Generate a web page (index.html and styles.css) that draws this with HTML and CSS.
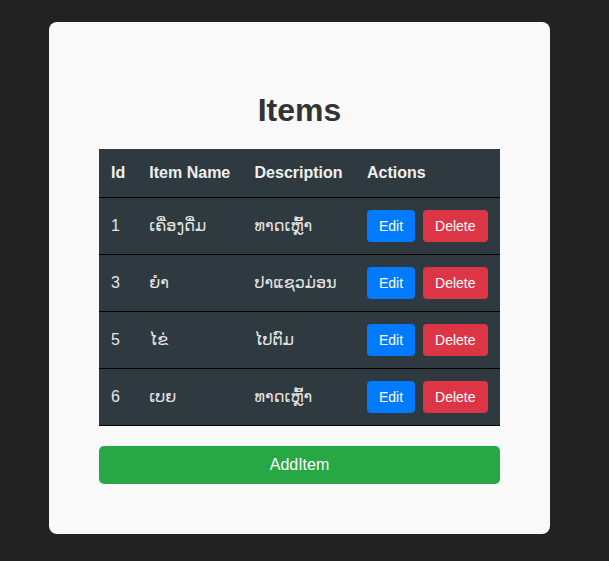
FILE: index.html
```html
<!DOCTYPE html>
<html lang="lo">
<head>
<meta charset="utf-8">
<title>Items</title>
<link rel="stylesheet" href="styles.css">
</head>
<body>
<div class="card">
  <h1 class="title">Items</h1>
  <table class="items">
    <thead>
      <tr><th>Id</th><th>Item Name</th><th>Description</th><th>Actions</th></tr>
    </thead>
    <tbody>
      <tr><td>1</td><td>ເຄື່ອງດື່ມ</td><td>ທາດເຫຼົ້າ</td><td><div class="actions"><button class="btn edit">Edit</button><button class="btn del">Delete</button></div></td></tr>
      <tr><td>3</td><td>ຍຳ</td><td>ປາແຊວມ່ອນ</td><td><div class="actions"><button class="btn edit">Edit</button><button class="btn del">Delete</button></div></td></tr>
      <tr><td>5</td><td>ໄຂ່</td><td>ໄປຕົມ</td><td><div class="actions"><button class="btn edit">Edit</button><button class="btn del">Delete</button></div></td></tr>
      <tr><td>6</td><td>ເບຍ</td><td>ທາດເຫຼົ້າ</td><td><div class="actions"><button class="btn edit">Edit</button><button class="btn del">Delete</button></div></td></tr>
    </tbody>
  </table>
  <button class="add">AddItem</button>
</div>
</body>
</html>
```

FILE: styles.css
```css
html, body {
  margin: 0;
  padding: 0;
  background: #222222;
  font-family: "Liberation Sans", Arial, "DejaVu Sans", sans-serif;
}
body {
  padding: 22px 0 0 49px;
}
.card {
  width: 401px;
  padding: 50px;
  background: #f9f9f9;
  border-radius: 8px;
}
.title {
  margin: 20px 0 20px;
  text-align: center;
  font-size: 32px;
  line-height: 37px;
  font-weight: bold;
  color: #333333;
}
.items {
  width: 100%;
  border-collapse: collapse;
  background: #2f3a40;
  color: #e6e6e6;
  font-size: 16px;
}
.items th {
  text-align: left;
  font-weight: bold;
  padding: 12px;
  line-height: 24px;
  color: #f0f0f0;
  border-bottom: 1px solid #000;
}
.items td {
  padding: 12px;
  line-height: 32px;
  border-bottom: 1px solid #000;
  white-space: nowrap;
}
.actions {
  display: flex;
  gap: 8px;
}
.btn {
  font-family: "Liberation Sans", Arial, sans-serif;
  font-size: 14px;
  line-height: 20px;
  padding: 6px 12px;
  border: none;
  border-radius: 4px;
  color: #fff;
  cursor: pointer;
}
.edit { background: #007bff; }
.del { background: #dc3545; }
.add {
  display: block;
  width: 100%;
  margin-top: 20px;
  padding: 7px 0;
  font-family: "Liberation Sans", Arial, sans-serif;
  font-size: 16px;
  line-height: 24px;
  color: #fff;
  background: #28a745;
  border: none;
  border-radius: 5px;
}
```
